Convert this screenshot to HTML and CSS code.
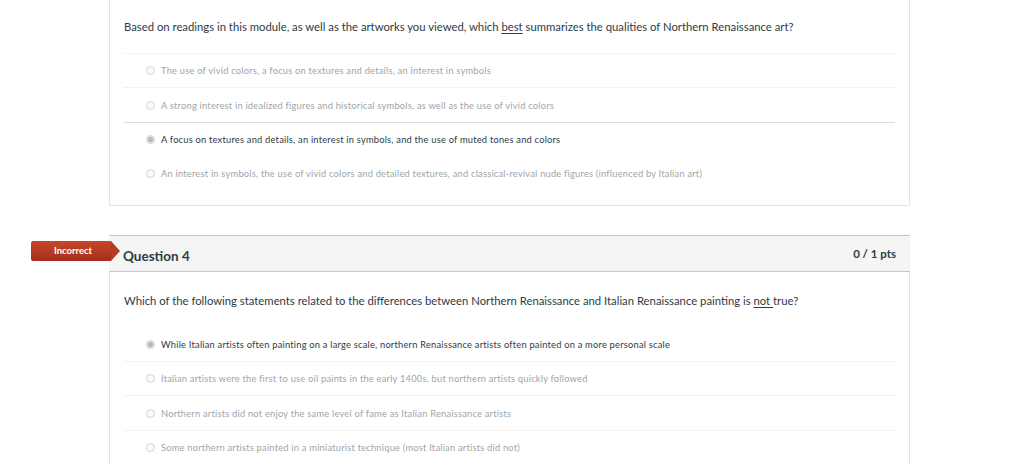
FILE: index.html
```html
<!DOCTYPE html>
<html>
<head>
<meta charset="utf-8">
<link rel="stylesheet" href="styles.css">
</head>
<body>
<div class="quiz">
  <div class="question first">
    <div class="q-text">Based on readings in this module, as well as the artworks you viewed, which <u>best</u> summarizes the qualities of Northern Renaissance art?</div>
    <div class="answers">
      <div class="answer faint"><span class="radio"></span>The use of vivid colors, a focus on textures and details, an interest in symbols</div>
      <div class="answer faint"><span class="radio"></span>A strong interest in idealized figures and historical symbols, as well as the use of vivid colors</div>
      <div class="answer selected strong"><span class="radio on"></span>A focus on textures and details, an interest in symbols, and the use of muted tones and colors</div>
      <div class="answer"><span class="radio"></span>An interest in symbols, the use of vivid colors and detailed textures, and classical-revival nude figures (influenced by Italian art)</div>
    </div>
  </div>

  <div class="question second">
    <div class="badge">Incorrect</div>
    <div class="q-header">
      <span class="q-title">Question 4</span>
      <span class="q-pts">0 / 1 pts</span>
    </div>
    <div class="q-text q4">Which of the following statements related to the differences between Northern Renaissance and Italian Renaissance painting is <u>not </u>true?</div>
    <div class="answers">
      <div class="answer selected"><span class="radio on"></span>While Italian artists often painting on a large scale, northern Renaissance artists often painted on a more personal scale</div>
      <div class="answer faint"><span class="radio"></span>Italian artists were the first to use oil paints in the early 1400s, but northern artists quickly followed</div>
      <div class="answer faint"><span class="radio"></span>Northern artists did not enjoy the same level of fame as Italian Renaissance artists</div>
      <div class="answer faint"><span class="radio"></span>Some northern artists painted in a miniaturist technique (most Italian artists did not)</div>
    </div>
  </div>
</div>
</body>
</html>
```

FILE: styles.css
```css
html, body {
  margin: 0;
  padding: 0;
  background: #ffffff;
  font-family: Lato, "Open Sans", "Liberation Sans", sans-serif;
  color: #2d3b45;
}

.quiz {
  display: flex;
  flex-direction: column;
  gap: 29px;
  width: 801px;
  margin-left: 109px;
}

.question {
  position: relative;
  border: 1px solid #e3e3e3;
  background: #fff;
}

.question.first {
  border-top: none;
  padding-bottom: 14px;
}

.question.second {
  border-bottom: none;
}

.q-text {
  font-size: 11.3px;
  line-height: 16px;
  padding: 19px 14px 18px;
  color: #2d3b45;
}

.q-text u {
  text-underline-offset: 2px;
}

.q-text.q4 {
  padding: 21px 14px 18px;
}

.answers {
  margin: 0 14px 0 14px;
}

.answer {
  display: flex;
  align-items: center;
  height: 33.4px;
  padding-left: 22px;
  font-size: 9.3px;
  letter-spacing: 0.22px;
  color: #a0a5a8;
  border-top: 1px solid transparent;
}

.answer.faint {
  border-top-color: #f2f2f2;
}

.answer.strong {
  border-top-color: #dcdcdc;
}

.answer.selected {
  color: #2d3b45;
}

.radio {
  width: 7px;
  height: 7px;
  border-radius: 50%;
  border: 1px solid #d6d6d6;
  background: #fafafa;
  margin-right: 6px;
  flex: none;
}

.radio.on {
  background: radial-gradient(circle, #b8b8b8 0 2.2px, #e6e6e6 2.8px);
  border-color: #d0d0d0;
}

.q-header {
  display: flex;
  justify-content: space-between;
  align-items: center;
  height: 35px;
  padding: 0 14px;
  background: #f5f5f5;
  border-top: 1px solid #c5c5c5;
  border-bottom: 1px solid #c9c9c9;
  margin: -1px -1px 0 -1px;
}

.q-title {
  font-size: 13.5px;
  font-weight: 700;
  color: #2d3b45;
  padding-top: 6px;
}

.q-pts {
  font-size: 11.5px;
  font-weight: 700;
  color: #2d3b45;
}

.badge {
  position: absolute;
  left: -79px;
  top: 5px;
  height: 20px;
  line-height: 20px;
  color: #fff;
  font-size: 9.5px;
  font-weight: 700;
  background: linear-gradient(#c8452d, #a32f1c);
  border-radius: 2px 0 0 2px;
  box-sizing: border-box;
  width: 80px;
  text-align: center;
  padding-left: 4px;
}

.badge::after {
  content: "";
  position: absolute;
  right: -9px;
  top: 0;
  border-top: 10px solid transparent;
  border-bottom: 10px solid transparent;
  border-left: 9px solid #b53b25;
}
```
